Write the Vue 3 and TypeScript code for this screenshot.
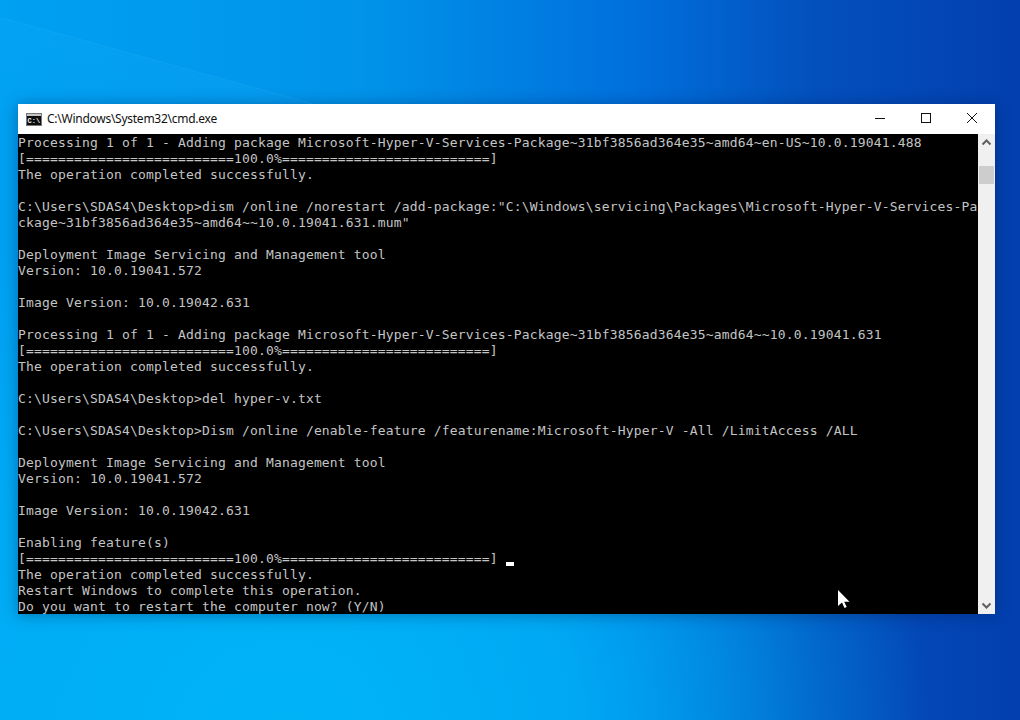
<script setup lang="ts">
const before: string[] = [
  'Processing 1 of 1 - Adding package Microsoft-Hyper-V-Services-Package~31bf3856ad364e35~amd64~en-US~10.0.19041.488',
  '[==========================100.0%==========================]',
  'The operation completed successfully.',
  '',
  'C:\\Users\\SDAS4\\Desktop>dism /online /norestart /add-package:"C:\\Windows\\servicing\\Packages\\Microsoft-Hyper-V-Services-Pa',
  'ckage~31bf3856ad364e35~amd64~~10.0.19041.631.mum"',
  '',
  'Deployment Image Servicing and Management tool',
  'Version: 10.0.19041.572',
  '',
  'Image Version: 10.0.19042.631',
  '',
  'Processing 1 of 1 - Adding package Microsoft-Hyper-V-Services-Package~31bf3856ad364e35~amd64~~10.0.19041.631',
  '[==========================100.0%==========================]',
  'The operation completed successfully.',
  '',
  'C:\\Users\\SDAS4\\Desktop>del hyper-v.txt',
  '',
  'C:\\Users\\SDAS4\\Desktop>Dism /online /enable-feature /featurename:Microsoft-Hyper-V -All /LimitAccess /ALL',
  '',
  'Deployment Image Servicing and Management tool',
  'Version: 10.0.19041.572',
  '',
  'Image Version: 10.0.19042.631',
  '',
  'Enabling feature(s)',
]
const progress = '[==========================100.0%==========================] '
const after: string[] = [
  'The operation completed successfully.',
  'Restart Windows to complete this operation.',
  'Do you want to restart the computer now? (Y/N)',
]
</script>

<template>
  <div class="desktop">
    <div class="streak"></div>
    <div class="window">
      <header class="titlebar">
        <svg class="app-icon" width="16" height="13" viewBox="0 0 16 13">
          <rect x="0.5" y="0.5" width="15" height="12" fill="#0c0c0c" stroke="#777" />
          <rect x="1" y="1" width="14" height="2" fill="#c4c4c4" />
          <text x="1.5" y="10" class="icon-text">C:\</text>
        </svg>
        <span class="title">C:\Windows\System32\cmd.exe</span>
        <div class="controls">
          <button class="ctl" aria-label="Minimize">
            <svg width="12" height="12" viewBox="0 0 12 12"><path d="M1 6.5h10" stroke="#111" fill="none" /></svg>
          </button>
          <button class="ctl" aria-label="Maximize">
            <svg width="12" height="12" viewBox="0 0 12 12"><rect x="1.5" y="1.5" width="9" height="9" stroke="#111" fill="none" /></svg>
          </button>
          <button class="ctl" aria-label="Close">
            <svg width="12" height="12" viewBox="0 0 12 12"><path d="M1 1l10 10M11 1L1 11" stroke="#111" fill="none" /></svg>
          </button>
        </div>
      </header>
      <div class="body">
        <div class="console">
          <div v-for="(l, i) in before" :key="'b' + i" class="line">{{ l }}</div>
          <div class="line">{{ progress }}<span class="caret"></span></div>
          <div v-for="(l, i) in after" :key="'a' + i" class="line">{{ l }}</div>
          <svg class="pointer" width="12" height="19" viewBox="0 0 12 19">
            <path d="M0 0v16l4-3.5 2.5 5.5 2.2-1-2.5-5.2H11.5z" fill="#fff" />
          </svg>
        </div>
        <div class="scrollbar">
          <svg class="arrow" width="17" height="17" viewBox="0 0 17 17"><path d="M4.5 10.5l4-4 4 4" stroke="#606060" stroke-width="2" fill="none" /></svg>
          <div class="track"><div class="thumb"></div></div>
          <svg class="arrow" width="17" height="17" viewBox="0 0 17 17"><path d="M4.5 6.5l4 4 4-4" stroke="#606060" stroke-width="2" fill="none" /></svg>
        </div>
      </div>
    </div>
  </div>
</template>

<style>
html, body { margin: 0; background: #0080e0; }
</style>

<style scoped>
.desktop {
  position: relative;
  width: 1020px;
  height: 720px;
  box-sizing: border-box;
  padding: 104px 25px 0 18px;
  overflow: hidden;
  background:
    radial-gradient(ellipse 640px 540px at 290px 730px, #00b4f8 0%, rgba(0, 176, 246, 0.85) 45%, rgba(0, 160, 240, 0) 100%),
    linear-gradient(90deg, #00a0f2 0%, #0094ea 35%, #0070dc 62%, #0350bd 80%, #033fae 100%);
}
.streak {
  position: absolute;
  left: -6px;
  top: 15px;
  width: 340px;
  height: 120px;
  border-top: 1px solid rgba(90, 200, 255, 0.16);
  background: linear-gradient(180deg, rgba(30, 180, 255, 0.14), rgba(30, 180, 255, 0));
  transform: rotate(15.5deg);
  transform-origin: left top;
}
.window {
  position: relative;
  width: 977px;
  height: 510px;
  display: flex;
  flex-direction: column;
  box-shadow: 0 1px 14px rgba(0, 20, 70, 0.38);
}
.titlebar {
  height: 30px;
  flex: none;
  background: #fff;
  display: flex;
  align-items: center;
  padding-left: 8px;
}
.app-icon { flex: none; }
.icon-text {
  font-family: "Liberation Mono", monospace;
  font-size: 7px;
  font-weight: 700;
  fill: #f0f0f0;
}
.title {
  margin-left: 5px;
  padding-bottom: 2px;
  font-family: "Noto Sans", sans-serif;
  font-size: 12px;
  letter-spacing: -0.26px;
  color: #111;
}
.controls { margin-left: auto; display: flex; height: 100%; }
.ctl {
  width: 46px;
  height: 30px;
  padding: 0;
  border: 0;
  background: transparent;
  display: flex;
  align-items: center;
  justify-content: center;
}
.ctl svg { display: block; margin-top: -3px; }
.body { flex: 1; display: flex; min-height: 0; }
.console {
  position: relative;
  flex: 1;
  box-sizing: border-box;
  padding-top: 1px;
  background: #000;
  color: #c4c4c4;
  font-family: "DejaVu Sans Mono", monospace;
  font-size: 13px;
  letter-spacing: 0.17px;
  line-height: 16px;
  overflow: hidden;
}
.line { height: 16px; white-space: pre; }
.caret {
  display: inline-block;
  width: 8px;
  height: 4px;
  background: #fff;
  vertical-align: -3px;
}
.pointer { position: absolute; left: 820px; top: 456px; }
.scrollbar {
  width: 17px;
  flex: none;
  background: #f0f0f0;
  display: flex;
  flex-direction: column;
}
.arrow { display: block; flex: none; }
.track { flex: 1; padding: 15px 1px 0; }
.thumb { height: 18px; background: #cdcdcd; }
</style>
